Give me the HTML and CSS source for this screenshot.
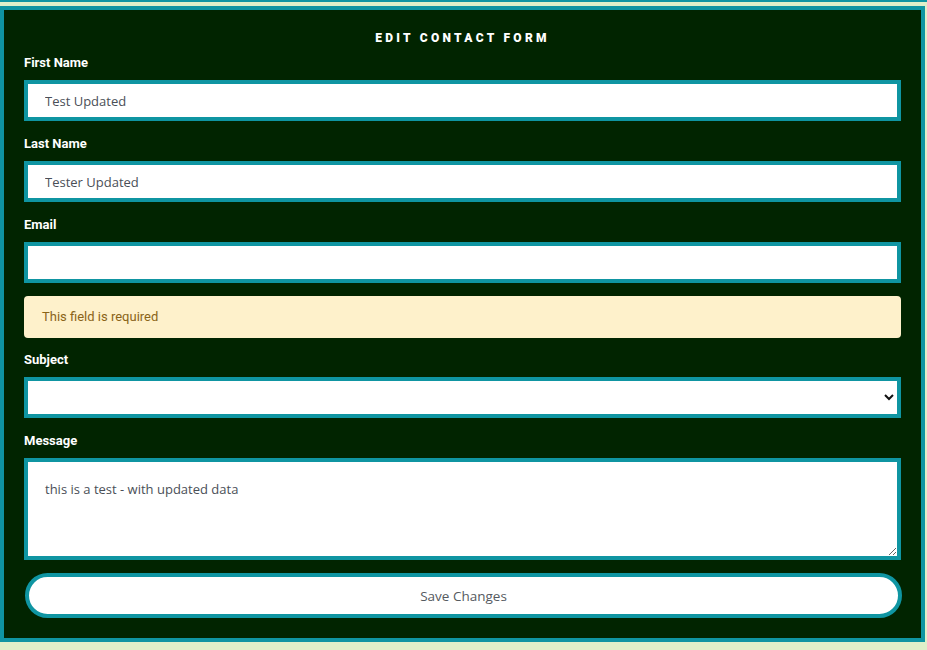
FILE: index.html
```html
<!DOCTYPE html>
<html lang="en">
<head>
<meta charset="utf-8">
<title>Edit Contact Form</title>
<link rel="stylesheet" href="styles.css">
</head>
<body>
<div class="topbar"></div>
<form class="panel">
  <h1 class="title">EDIT CONTACT FORM</h1>
  <label class="label" for="first">First Name</label>
  <input class="field" id="first" type="text" value="Test Updated">
  <label class="label" for="last">Last Name</label>
  <input class="field" id="last" type="text" value="Tester Updated">
  <label class="label" for="email">Email</label>
  <input class="field" id="email" type="email" value="">
  <div class="alert">This field is required</div>
  <label class="label" for="subject">Subject</label>
  <select class="field select" id="subject"><option></option></select>
  <label class="label" for="message">Message</label>
  <textarea class="field area" id="message">this is a test - with updated data</textarea>
  <button class="save" type="button">Save Changes</button>
</form>
</body>
</html>
```
FILE: styles.css
```css
* { box-sizing: border-box; }
html, body { margin: 0; padding: 0; }
body {
  background: #dff0c9;
  font-family: Roboto, "Liberation Sans", sans-serif;
  height: 650px;
  overflow: hidden;
}
.topbar {
  height: 2px;
  background: #0f95a2;
}
.panel {
  display: block;
  margin: 4px 2px 0 0;
  height: 636px;
  background: #012400;
  border: 4px solid #0f95a2;
  padding: 20px 20px 0 20px;
}
.title {
  margin: 0 0 9px 0;
  text-align: center;
  color: #ffffff;
  font-size: 12px;
  line-height: 16px;
  font-weight: 900;
  letter-spacing: 3.3px;
}
.label {
  display: block;
  color: #ffffff;
  font-weight: 700;
  font-size: 13px;
  line-height: 16px;
  margin-bottom: 9px;
}
.field {
  display: block;
  width: 100%;
  height: 41px;
  margin: 0 0 15px 0;
  border: 4px solid #0f95a2;
  border-radius: 0;
  background: #ffffff;
  padding: 0 17px;
  font-family: "Open Sans", Lato, sans-serif;
  font-size: 13px;
  color: #4a4f57;
  outline: none;
}
.select {
  padding: 0 12px 0 17px;
  color: #111;
}
.area {
  height: 102px;
  padding: 18px 17px;
  line-height: 18px;
  resize: vertical;
  margin-bottom: 13px;
}
.alert {
  height: 42px;
  margin: -2px 0 14px 0;
  background: #fef1cb;
  color: #8a6418;
  border-radius: 4px;
  padding: 0 18px;
  font-size: 13px;
  line-height: 42px;
}
.save {
  display: block;
  width: 877px;
  height: 45px;
  margin-left: 1px;
  border: 4px solid #0f95a2;
  border-radius: 23px;
  background: #ffffff;
  font-family: "Open Sans", Lato, sans-serif;
  font-size: 13.5px;
  color: #555a60;
  cursor: pointer;
}
```
